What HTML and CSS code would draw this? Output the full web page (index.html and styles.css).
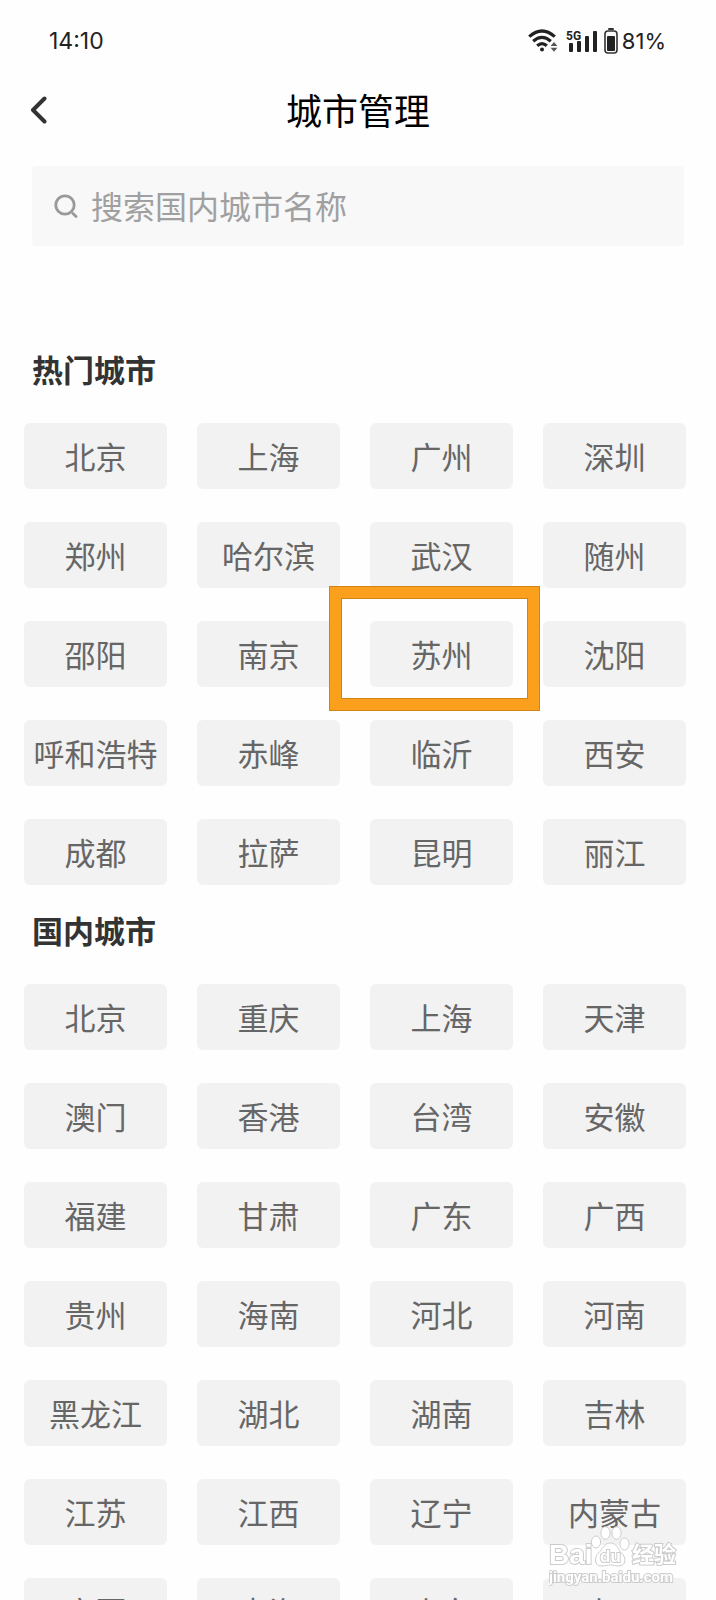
FILE: index.html
```html
<!DOCTYPE html>
<html lang="zh-CN">
<head>
<meta charset="utf-8">
<meta name="viewport" content="width=device-width, initial-scale=1">
<title>城市管理</title>
<link rel="stylesheet" href="styles.css">
</head>
<body>
<div class="app">
  <div class="status">
    <time class="status-text">14:10</time>
    <div class="status-icons">
      <svg class="wifi" width="30" height="24" viewBox="0 0 30 24" aria-hidden="true">
        <g fill="none" stroke="#222" stroke-width="3.2">
          <path d="M1.2 7.6Q14 -3.6 26.8 7.6"/>
          <path d="M5.2 12.2Q14 4.4 22.8 12.2"/>
          <path d="M9.2 16.8Q14 12.4 18.8 16.8"/>
        </g>
        <circle cx="14" cy="20.4" r="2" fill="#222"/>
        <path d="M26 13l3.4 4h-6.8zM26 22.800l3.400-4h-6.800z" fill="#555"/>
      </svg>
      <svg class="signal" width="34" height="24" viewBox="0 0 34 24" aria-hidden="true">
        <text class="signal-label" x="0" y="11">5G</text>
        <g fill="#222">
          <rect x="3" y="14" width="4" height="9" rx="1"/>
          <rect x="11" y="12" width="4" height="11" rx="1"/>
          <rect x="19" y="7" width="4" height="16" rx="1"/>
          <rect x="27" y="2" width="4" height="21" rx="1"/>
        </g>
      </svg>
      <svg class="battery" width="14" height="26" viewBox="0 0 14 26" aria-hidden="true">
        <rect x="4" y="0" width="6" height="2" rx="1" fill="#333"/>
        <rect x="1" y="3" width="12" height="22" rx="3" fill="none" stroke="#333" stroke-width="1.600"/>
        <rect x="3" y="8" width="8" height="15" rx="1" fill="#222"/>
      </svg>
      <span class="status-text status-percent">81%</span>
    </div>
  </div>

  <header class="topbar">
    <button class="back" type="button" aria-label="返回">
      <svg width="18" height="28" viewBox="0 0 18 28" aria-hidden="true"><path d="M14.500 2.500L3 14l11.500 11.500" fill="none" stroke="#333" stroke-width="4" stroke-linecap="round" stroke-linejoin="round"/></svg>
    </button>
    <h1 class="title">城市管理</h1>
  </header>

  <label class="search">
    <svg class="search-icon" width="24" height="24" viewBox="0 0 24 24" aria-hidden="true"><circle cx="11" cy="11" r="9.200" fill="none" stroke="#999" stroke-width="2.800"/><path d="M19 19.500l3 3" stroke="#999" stroke-width="2.800" stroke-linecap="round"/></svg>
    <input class="search-input" type="text" placeholder="搜索国内城市名称" aria-label="搜索国内城市名称">
  </label>

  <main class="content">
    <section>
      <h2 class="heading">热门城市</h2>
      <div class="grid">
        <button class="city">北京</button><button class="city">上海</button><button class="city">广州</button><button class="city">深圳</button>
        <button class="city">郑州</button><button class="city">哈尔滨</button><button class="city">武汉</button><button class="city">随州</button>
        <button class="city">邵阳</button><button class="city">南京</button><button class="city city-marked">苏州</button><button class="city">沈阳</button>
        <button class="city">呼和浩特</button><button class="city">赤峰</button><button class="city">临沂</button><button class="city">西安</button>
        <button class="city">成都</button><button class="city">拉萨</button><button class="city">昆明</button><button class="city">丽江</button>
      </div>
    </section>
    <section>
      <h2 class="heading">国内城市</h2>
      <div class="grid">
        <button class="city">北京</button><button class="city">重庆</button><button class="city">上海</button><button class="city">天津</button>
        <button class="city">澳门</button><button class="city">香港</button><button class="city">台湾</button><button class="city">安徽</button>
        <button class="city">福建</button><button class="city">甘肃</button><button class="city">广东</button><button class="city">广西</button>
        <button class="city">贵州</button><button class="city">海南</button><button class="city">河北</button><button class="city">河南</button>
        <button class="city">黑龙江</button><button class="city">湖北</button><button class="city">湖南</button><button class="city">吉林</button>
        <button class="city">江苏</button><button class="city">江西</button><button class="city">辽宁</button><button class="city">内蒙古</button>
        <button class="city">宁夏</button><button class="city">青海</button><button class="city">山东</button><button class="city">山西</button>
      </div>
    </section>
  </main>

  <div class="watermark">
    <svg width="132" height="66" viewBox="0 0 132 66" role="img" aria-label="Baidu 经验">
      <g class="mark">
        <ellipse cx="47" cy="16" rx="4.600" ry="6"/>
        <ellipse cx="56.500" cy="7" rx="4.600" ry="6.300"/>
        <ellipse cx="67.500" cy="7" rx="4.600" ry="6.300"/>
        <ellipse cx="75.500" cy="18" rx="4.600" ry="6"/>
        <path d="M61.500 17c6.500 0 7.500 6.500 11 10 5 4.500 5 13-3 13-3.500 0-5-1-8-1s-5 1-9 1c-7.500 0-7.500-9-3-13 4-3.500 5.500-10 12-10z"/>
        <text class="mark-latin" x="0" y="38">Bai</text>
        <text class="mark-du" x="51" y="36">du</text>
        <text class="mark-cjk" x="83" y="36">经验</text>
        <text class="mark-url" x="0" y="56">jingyan.baidu.com</text>
      </g>
    </svg>
  </div>
</div>
</body>
</html>
```
FILE: styles.css
```css
* {
  box-sizing: border-box;
}

body {
  margin: 0;
  background: #fefefe;
  color: #333;
  font-family: "Noto Sans CJK SC", sans-serif;
}

button {
  margin: 0;
  padding: 0;
  border: 0;
  background: none;
  color: inherit;
  font: inherit;
  cursor: pointer;
}

.app {
  height: 100vh;
  overflow-y: auto;
  scrollbar-width: none;
}

.status {
  display: flex;
  align-items: center;
  justify-content: space-between;
  height: 82px;
  padding: 0 50px 0 49px;
}

.status-text {
  color: #222;
  font-family: Inter, sans-serif;
  font-size: 23px;
  line-height: 28px;
}

.status-percent {
  font-size: 22px;
}

.status-icons {
  display: flex;
  align-items: center;
  gap: 4px;
}

.signal {
  margin-left: 4px;
}

.signal-label {
  fill: #222;
  font-family: Roboto, sans-serif;
  font-size: 12px;
  font-weight: 700;
}

.topbar {
  display: grid;
  grid-template-columns: 48px 1fr 48px;
  align-items: center;
  height: 56px;
  padding: 0 16px;
}

.back {
  display: flex;
  align-items: center;
  height: 48px;
  padding-left: 14px;
}

.title {
  margin: 0;
  padding-bottom: 2px;
  color: #000;
  font-size: 36px;
  font-weight: 400;
  line-height: 54px;
  text-align: center;
}

.search {
  display: flex;
  align-items: center;
  gap: 13px;
  height: 80px;
  margin: 28px 32px 0;
  padding: 0 22px;
  border-radius: 4px;
  background: #f8f8f8;
}

.search-input {
  flex: 1;
  min-width: 0;
  padding: 0 0 2px;
  border: 0;
  outline: 0;
  background: none;
  color: #333;
  font: inherit;
  font-size: 32px;
  line-height: 48px;
}

.search-input::placeholder {
  color: #a0a0a0;
  opacity: 1;
}

.content {
  padding: 78px 30px 24px 24px;
}

.heading {
  margin: 0;
  padding: 21px 8px 30px;
  font-size: 31px;
  font-weight: 700;
  line-height: 48px;
}

.grid {
  display: grid;
  grid-template-columns: repeat(4, minmax(0, 1fr));
  gap: 33px 30px;
}

.city {
  height: 66px;
  border-radius: 6px;
  background: #f2f2f2;
  color: #666;
  font-size: 31px;
  line-height: 66px;
  white-space: nowrap;
}

.city-marked {
  position: relative;
}

.city-marked::after {
  content: "";
  position: absolute;
  inset: -35px -27px -24px -41px;
  border: 12px solid #faa01c;
  outline: 1px solid #d08418;
  outline-offset: -1px;
  box-shadow: inset 0 0 0 1px #d08418;
}

.watermark {
  position: fixed;
  right: 35px;
  bottom: 8px;
  pointer-events: none;
}

.watermark svg {
  display: block;
}

.mark {
  fill: #fff;
  stroke: #ccc;
  stroke-width: 1px;
}

.mark text {
  font-weight: 700;
  stroke-width: 2px;
  paint-order: stroke;
}

.mark-latin {
  font-family: "Liberation Sans", sans-serif;
  font-size: 28px;
}

.mark-du {
  font-family: "Liberation Sans", sans-serif;
  font-size: 17px;
}

.mark-cjk {
  font-size: 22px;
}

.mark-url {
  font-family: Roboto, sans-serif;
  font-size: 15px;
}
```
